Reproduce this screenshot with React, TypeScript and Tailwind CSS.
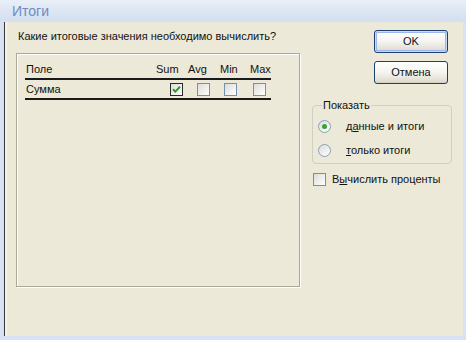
import React from "react";

const font = { fontFamily: '"Liberation Sans", Arial, sans-serif' };

const CheckBox = ({ checked = false }: { checked?: boolean }) => (
  <span
    className={
      "relative inline-block w-[13px] h-[13px] border bg-gradient-to-br from-[#dcdcd7] to-white " +
      (checked ? "border-[#2a2a2a]" : "border-[#7490ae]")
    }
  >
    {checked && (
      <svg className="absolute left-[1px] top-[1px]" width="9" height="9" viewBox="0 0 9 9">
        <path d="M1 4.2 L3.3 6.6 L8 1.8" fill="none" stroke="#21a121" strokeWidth="2" />
      </svg>
    )}
  </span>
);

const Radio = ({ checked = false }: { checked?: boolean }) => (
  <span className="flex items-center justify-center w-[13px] h-[13px] rounded-full border border-[#8aa0b8] bg-gradient-to-br from-[#dcdcd7] to-white">
    {checked && <span className="w-[5px] h-[5px] rounded-full bg-[#2fa82f]" />}
  </span>
);

const XpButton = ({ label, def = false }: { label: string; def?: boolean }) => (
  <button
    className={
      "w-[74px] h-[23px] rounded-[3px] border border-[#1f3f73] text-[11px] text-[#111] bg-gradient-to-b from-white via-[#f4f4f0] to-[#dcd8cc] " +
      (def ? "shadow-[inset_0_0_0_1px_#c8dcf8,inset_0_0_0_2px_#9bb6ea]" : "shadow-[inset_0_-1px_0_#d6d0c2]")
    }
  >
    {label}
  </button>
);

export default function App() {
  return (
    <div className="w-[466px] h-[340px] flex flex-col bg-[#b6c9ea] overflow-hidden" style={font}>
      {/* title bar */}
      <div className="h-[22px] flex items-center pl-[12px] bg-gradient-to-b from-[#e9eff8] to-[#d3def0] border-b border-[#f3dcc4]">
        <span className="text-[14px] text-[#6d8cbf] leading-none">Итоги</span>
      </div>

      <div className="flex-1 flex pl-[4px] pr-[3px] pb-[4px] bg-[#d8e2f2]">
        <div className="flex-1 flex border-l border-[#33363a] bg-[#ece9d8] shadow-[inset_2px_0_0_#f6f3e6] text-[11px] text-[#111]">
          {/* left column */}
          <div className="ml-[11px] w-[284px] flex flex-col pt-[8px]">
            <div className="ml-[2px] h-[13px] leading-[13px]">Какие итоговые значения необходимо вычислить?</div>
            <div className="mt-[10px] h-[234px] border border-[#aca899] shadow-[1px_1px_0_#fff,inset_1px_1px_0_#fff] pt-[7px] pl-[8px]">
              <div className="w-[246px]">
                <div className="flex h-[19px] items-center border-b-2 border-[#1a1a1a]">
                  <span className="w-[131px] pl-[1px]">Поле</span>
                  <span className="w-[32px]">Sum</span>
                  <span className="w-[32px]">Avg</span>
                  <span className="w-[30px]">Min</span>
                  <span>Max</span>
                </div>
                <div className="flex h-[20px] items-center border-b-2 border-[#1a1a1a]">
                  <span className="w-[145px] pl-[1px]">Сумма</span>
                  <CheckBox checked />
                  <span className="w-[14px]" />
                  <CheckBox />
                  <span className="w-[14px]" />
                  <CheckBox />
                  <span className="w-[16px]" />
                  <CheckBox />
                </div>
              </div>
            </div>
          </div>

          {/* right column */}
          <div className="ml-[12px] w-[140px] flex flex-col pt-[8px]">
            <div className="ml-[62px] flex flex-col gap-[8px]">
              <XpButton label="OK" def />
              <XpButton label="Отмена" />
            </div>
            <fieldset className="mt-[15px] h-[65px] border border-[#d0d0bf] rounded-[4px] px-[5px]">
              <legend className="ml-[4px] px-[1px] leading-[13px]">Показать</legend>
              <div className="flex items-center h-[13px] mt-[8px]">
                <Radio checked />
                <span className="ml-[15px]">
                  д<span className="underline">а</span>нные и итоги
                </span>
              </div>
              <div className="flex items-center h-[13px] mt-[11px]">
                <Radio />
                <span className="ml-[15px]">
                  <span className="underline">т</span>олько итоги
                </span>
              </div>
            </fieldset>
            <div className="flex items-center mt-[7px] ml-[1px]">
              <CheckBox />
              <span className="ml-[6px]">
                В<span className="underline">ы</span>числить проценты
              </span>
            </div>
          </div>
        </div>
      </div>
    </div>
  );
}
